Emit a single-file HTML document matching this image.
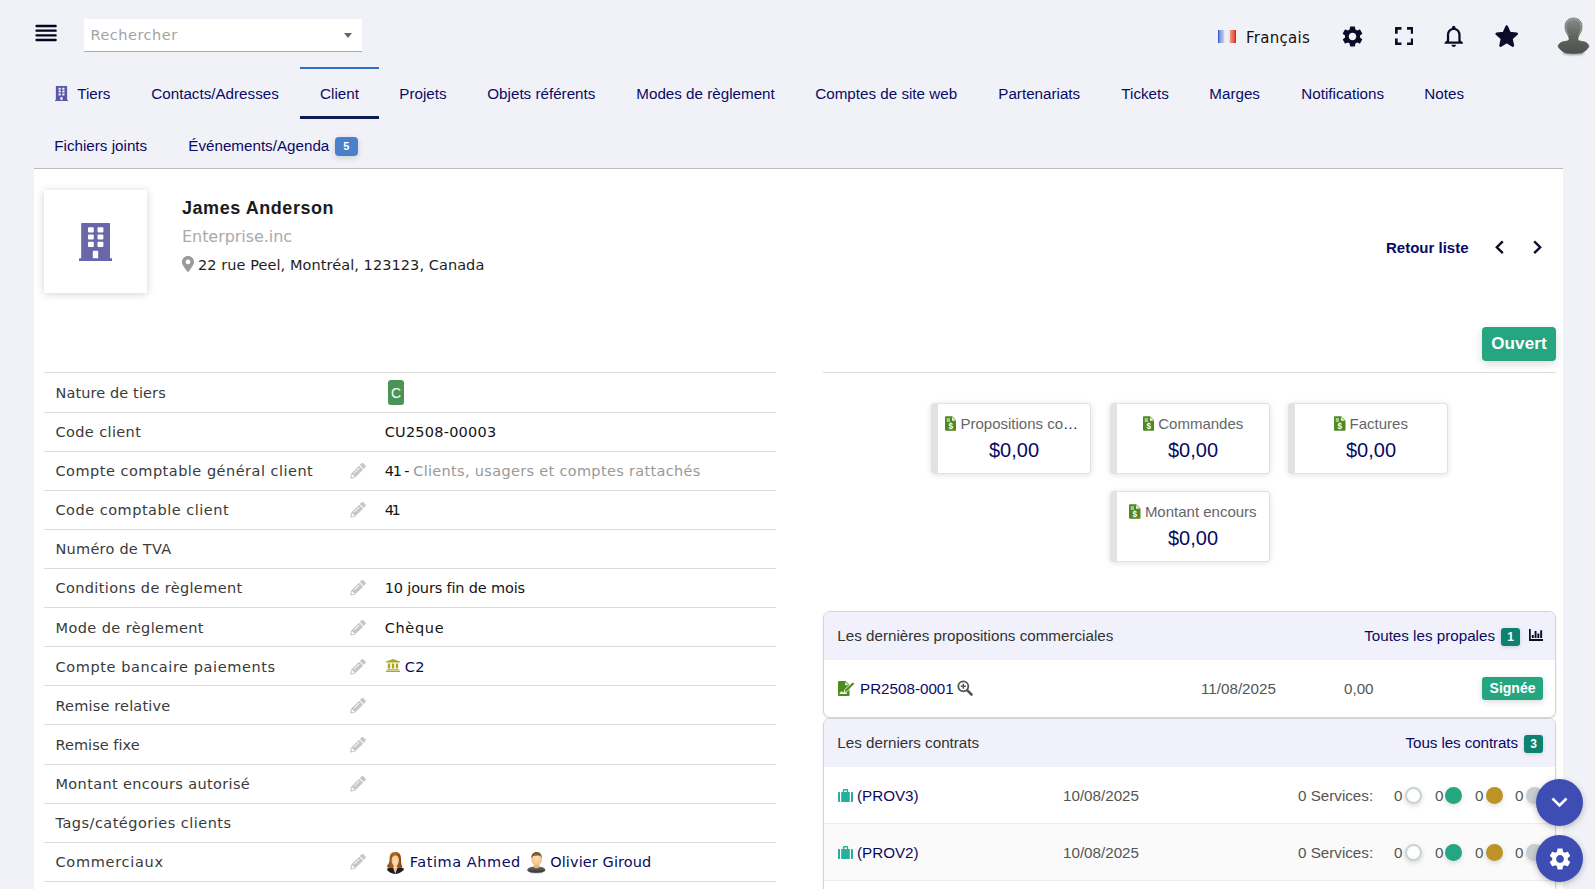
<!DOCTYPE html>
<html lang="fr">
<head>
<meta charset="utf-8">
<title>James Anderson - Client</title>
<style>
*{box-sizing:border-box;margin:0;padding:0}
html,body{width:1595px;height:889px;overflow:hidden;background:#f1f2f8}
body{position:relative;font-family:"Liberation Sans",sans-serif;font-size:15px;color:#0a0a64}
.abs{position:absolute}
.pp{font-family:"Liberation Sans",sans-serif;letter-spacing:.55px}
/* header */
#search{left:84px;top:19px;width:278px;height:33px;background:#fff;border-bottom:1px solid #aaa}
#search span{position:absolute;left:6.5px;top:6px;font-family:"DejaVu Sans",sans-serif;font-size:14.5px;line-height:20px;color:#a4a4a4;letter-spacing:.5px}
#search b{position:absolute;right:10px;top:14px;width:0;height:0;border:4px solid transparent;border-top:5px solid #666;border-bottom:0}
/* tabs */
.tab{position:absolute;height:52px;line-height:54px;font-size:15.2px;color:#0a0a64;white-space:nowrap}
.tab.act{border-top:2px solid #2f6fc4;border-bottom:3px solid #0c1e50}
.bdg{display:inline-block;background:#4a7fc9;color:#fff;font-size:11px;font-weight:bold;line-height:19px;height:19px;width:23px;text-align:center;border-radius:4px;vertical-align:middle;margin-left:5.5px;position:relative;top:0;letter-spacing:0;box-shadow:0 2px 6px rgba(0,0,0,.15)}
/* panel */
#panel{left:34px;top:168px;width:1529px;height:721px;background:#fff;border-top:1px solid #bbb}

/* Poppins substitutes */
.pr{font-family:"DejaVu Sans","Liberation Sans",sans-serif}
.pb{font-family:"Liberation Sans",sans-serif;font-weight:bold}
/* header right */
#lang{left:1246px;top:28px;font-size:15px;color:#111;line-height:20px;letter-spacing:.27px}
#flag{left:1218px;top:30px;width:18px;height:13px;background:linear-gradient(90deg,#2446c2 0,#7c9ae6 10%,#b4c6f3 30%,#e6e7ee 36%,#f3f3f4 50%,#e9e1e1 64%,#ef8b7e 70%,#ec5a4c 88%,#de1606 100%)}
/* photo */
#photo{left:44px;top:190px;width:103px;height:103px;background:#fff;box-shadow:0 1px 8px rgba(0,0,0,.18)}
#name{left:182px;top:196px;font-size:18px;line-height:24px;color:#1c1c1c;letter-spacing:.55px}
#comp{left:182px;top:226px;font-size:16px;line-height:22px;color:#aaa;letter-spacing:-.05px}
#addr{left:198px;top:255px;font-size:14.5px;line-height:20px;color:#1e1e1e;letter-spacing:.07px}
/* left table */
#lt{left:44px;top:372px;width:732px}
#lt .r{position:absolute;left:0;width:732px;height:40px;border-top:1px solid #dcdcdc;font-size:14.5px;line-height:39px;white-space:nowrap;color:#141414}
#lt .l{position:absolute;left:11.5px;color:#3a3a3a}
#lt .r>span,#lt .r>a{position:absolute}
#lt .e{position:absolute;left:305.5px;top:11px;width:16px;height:15.5px}
#lt .g{color:#999}
#lt a{color:#0a0a64;text-decoration:none}
.cbadge{width:16px;height:25px;line-height:27px;background:#4a9555;color:#fff;border-radius:3px;text-align:center;font-family:"Liberation Sans",sans-serif;font-size:14px;left:344px;top:7px}
/* right */
#back{left:1386px;top:238px;font-size:15px;line-height:20px;color:#0a0a64}
#open{left:1482px;top:327px;width:74px;height:34px;background:#25a580;border-radius:4px;color:#fff;font-size:17px;letter-spacing:.15px;line-height:34px;text-align:center;box-shadow:0 3px 9px rgba(0,0,0,.14)}
#rline{left:823px;top:372px;width:733px;height:1px;background:#dcdcdc}
.ib{position:absolute;width:160px;height:71px;background:#fff;border:1px solid #e2e2e2;border-left:7px solid #e2e2e2;border-radius:4px;box-shadow:0 1px 6px rgba(0,0,0,.12);text-align:center;white-space:nowrap}
.ib .t{position:absolute;left:0;right:0;top:10px;font-size:15px;line-height:20px;color:#666}
.ib .a{position:absolute;left:0;right:0;top:33px;font-size:20px;line-height:26px;color:#0a0a64}
.ib svg{vertical-align:-2px;margin-right:4px;width:11.5px}
.tb{position:absolute;left:823px;width:733px;border:1px solid #d4d4d4;border-radius:7px;background:#fff;box-shadow:0 1px 2px rgba(0,0,0,.1);overflow:hidden}
.tb .h{height:48px;background:#f0f1fb;position:relative;line-height:48px;font-size:15.2px;color:#333}
.tb .h .lt{position:absolute;left:13.3px}
.tb .h .rt{position:absolute;right:12px;color:#0a0a64}
.tb .rw{height:57px;position:relative;line-height:57px;font-size:15.2px;color:#555;border-top:1px solid #ececec;white-space:nowrap}
.tb .rw.alt{background:#fafafa}
.tb .rw span,.tb .rw a{position:absolute;top:0}
.tb a{color:#0a0a64;text-decoration:none}
.nb{display:inline-block;background:#0d8270;color:#fff;font-size:12px;font-weight:bold;width:19px;height:18px;line-height:18px;border-radius:3px;text-align:center;vertical-align:middle;margin-left:6px;position:relative;top:0;box-shadow:0 1px 4px rgba(0,0,0,.15)}
.sg{position:absolute;background:#25a580;color:#fff;font-weight:bold;font-size:14px;border-radius:3px;text-align:center;box-shadow:0 2px 6px rgba(0,0,0,.15)}
.dot{position:absolute;width:17px;height:17px;border-radius:50%;box-shadow:0 2px 5px rgba(0,0,0,.15)}
.fab{position:absolute;width:47px;height:47px;border-radius:50%;background:#3d4db3;box-shadow:0 2px 6px rgba(0,0,0,.25)}
</style>
</head>
<body>
<!-- header -->
<svg class="abs" style="left:34px;top:23px" width="24" height="20" viewBox="0 0 24 20"><path stroke="#05051e" stroke-width="2.400" stroke-linecap="round" fill="none" d="M2.600 2.950H21.600M2.600 7.650H21.600M2.600 12.350H21.600M2.600 17H21.600"/></svg>
<div id="search" class="abs"><span>Rechercher</span><b></b></div>

<!-- tabs -->
<svg class="abs" style="left:55px;top:86px" width="13" height="15" viewBox="0 0 33.2 38"><path fill="#5a59a6" fill-rule="evenodd" d="M2.2 0.6Q2.2 0 2.8 0H30.4Q31 0 31 .6V35.3H32.6Q33.2 35.3 33.2 35.9V37.4Q33.2 38 32.6 38H.6Q0 38 0 37.4V35.9Q0 35.3 .6 35.3H2.2ZM9 5.3Q9 4.3 10 4.3H13.8Q14.8 4.3 14.8 5.3V8.5Q14.8 9.5 13.8 9.5H10Q9 9.5 9 8.5ZM18.5 5.3Q18.5 4.3 19.5 4.3H23.4Q24.4 4.3 24.4 5.3V8.5Q24.4 9.5 23.4 9.5H19.5Q18.5 9.5 18.5 8.5ZM9 12.4Q9 11.4 10 11.4H13.8Q14.8 11.4 14.8 12.4V15.6Q14.8 16.6 13.8 16.6H10Q9 16.6 9 15.6ZM18.5 12.4Q18.5 11.4 19.5 11.4H23.4Q24.4 11.4 24.4 12.4V15.6Q24.4 16.6 23.4 16.6H19.5Q18.5 16.6 18.5 15.6ZM9 19.8Q9 18.8 10 18.8H13.8Q14.8 18.8 14.8 19.8V23Q14.8 24 13.8 24H10Q9 24 9 23ZM18.5 19.8Q18.5 18.8 19.5 18.8H23.4Q24.4 18.8 24.4 19.8V23Q24.4 24 23.4 24H19.5Q18.5 24 18.5 23ZM13.8 28.8Q13.8 27.8 14.8 27.8H18.2Q19.2 27.8 19.2 28.8V35.3H13.8Z"/></svg>
<div class="tab" style="left:77.2px;top:67px">Tiers</div>
<div class="tab" style="left:151.3px;top:67px">Contacts/Adresses</div>
<div class="tab act" style="left:300px;top:67px;width:79px;text-align:center;line-height:50px">Client</div>
<div class="tab" style="left:399.3px;top:67px">Projets</div>
<div class="tab" style="left:487.3px;top:67px">Objets référents</div>
<div class="tab" style="left:636.3px;top:67px">Modes de règlement</div>
<div class="tab" style="left:815.3px;top:67px">Comptes de site web</div>
<div class="tab" style="left:998.3px;top:67px">Partenariats</div>
<div class="tab" style="left:1121.3px;top:67px">Tickets</div>
<div class="tab" style="left:1209.3px;top:67px">Marges</div>
<div class="tab" style="left:1301.3px;top:67px">Notifications</div>
<div class="tab" style="left:1424.3px;top:67px">Notes</div>
<div class="tab" style="left:54.3px;top:119px">Fichiers joints</div>
<div class="tab" style="left:188.3px;top:119px">Événements/Agenda<span class="bdg">5</span></div>


<!-- header right -->
<div id="flag" class="abs"></div>
<div id="lang" class="abs pr">Français</div>
<svg class="abs" style="left:1339.800px;top:23.500px" width="25" height="25" viewBox="0 0 24 24"><path fill="#0c0c28" d="M19.14 12.94c.04-.3.06-.61.06-.94 0-.32-.02-.64-.07-.94l2.03-1.58c.18-.14.23-.41.12-.61l-1.92-3.32c-.12-.22-.37-.29-.59-.22l-2.39.96c-.5-.38-1.03-.7-1.62-.94l-.36-2.54c-.04-.24-.24-.41-.48-.41h-3.84c-.24 0-.43.17-.47.41l-.36 2.54c-.59.24-1.13.57-1.62.94l-2.39-.96c-.22-.08-.47 0-.59.22L2.74 8.87c-.12.21-.08.47.12.61l2.03 1.58c-.05.3-.09.63-.09.94s.02.64.07.94l-2.03 1.58c-.18.14-.23.41-.12.61l1.92 3.32c.12.22.37.29.59.22l2.39-.96c.5.38 1.03.7 1.62.94l.36 2.54c.05.24.24.41.48.41h3.84c.24 0 .44-.17.47-.41l.36-2.54c.59-.24 1.13-.56 1.62-.94l2.39.96c.22.08.47 0 .59-.22l1.92-3.32c.12-.22.07-.47-.12-.61l-2.01-1.58zM12 15.6c-1.98 0-3.6-1.62-3.6-3.6s1.62-3.6 3.6-3.6 3.6 1.62 3.6 3.6-1.62 3.6-3.6 3.6z"/></svg>
<svg class="abs" style="left:1394.800px;top:26.900px" width="18.500" height="18.300" viewBox="0 0 20 19" preserveAspectRatio="none"><path fill="none" stroke="#0c0c28" stroke-width="3" stroke-linejoin="round" d="M1.4 7V1.4H7M13 1.4H18.6V7M18.6 12V17.6H13M7 17.6H1.4V12"/></svg>
<svg class="abs" style="left:1440.100px;top:23.100px" width="27.500" height="26.100" viewBox="0 0 24 24" preserveAspectRatio="none"><path fill="#0c0c28" d="M12 22c1.1 0 2-.9 2-2h-4c0 1.1.9 2 2 2zm6-6v-5c0-3.07-1.63-5.64-4.5-6.32V4c0-.83-.67-1.5-1.5-1.5s-1.5.67-1.5 1.5v.68C7.64 5.36 6 7.92 6 11v5l-2 2v1h16v-1l-2-2zm-2 1H8v-6c0-2.48 1.51-4.5 4-4.5s4 2.02 4 4.5v6z"/></svg>
<svg class="abs" style="left:1493px;top:23px" width="28" height="28" viewBox="0 0 28 28"><path fill="#0c0c28" stroke="#0c0c28" stroke-width="2.6" stroke-linejoin="round" d="M13.70 3.60L16.58 10.14L23.69 10.86L18.36 15.61L19.87 22.59L13.70 19.00L7.53 22.59L9.04 15.61L3.71 10.86L10.82 10.14Z"/></svg>
<svg class="abs" style="left:1556px;top:16px" width="36" height="42" viewBox="0 0 36 42"><defs><linearGradient id="ug" x1="0" y1="0" x2="0" y2="1"><stop offset="0" stop-color="#8a8c88"/><stop offset=".45" stop-color="#666864"/><stop offset="1" stop-color="#4e504c"/></linearGradient><filter id="ub" x="-20%" y="-50%" width="140%" height="200%"><feGaussianBlur stdDeviation="1"/></filter></defs><ellipse cx="17.5" cy="37" rx="11" ry="2" fill="#000" opacity=".35" filter="url(#ub)"/><path fill="url(#ug)" stroke="#4a4c48" stroke-width=".6" d="M17.5 2C12.5 2 9 5.500 9 10.500 9 14.500 10.500 17 12 19.500 13.200 21.500 13.500 23 12.500 24.500 11 25.500 7 25.200 5 26.500 3 27.800 1.800 29.500 2.200 30.800 3 32.500 6 35.500 9 36.800 12 37.600 23 37.600 26 36.800 29 35.500 32 32.500 32.800 30.800 33.200 29.500 32 27.800 30 26.500 28 25.200 24 25.500 22.500 24.500 21.500 23 21.800 21.500 23 19.500 24.500 17 26 14.500 26 10.500 26 5.500 22.500 2 17.500 2Z"/><path fill="none" stroke="#c8cac6" stroke-width=".7" opacity=".8" d="M12.800 19.600C11.200 17 9.900 14.300 9.900 10.600 9.900 6 13 2.900 17.500 2.900S25.100 6 25.100 10.600C25.100 14.300 23.800 17 22.200 19.600"/></svg>

<div id="panel" class="abs"></div>
<!-- tier header -->
<div id="photo" class="abs"></div>
<svg class="abs" style="left:79px;top:223px" width="33.2" height="38" viewBox="0 0 33.2 38"><path fill="#6867a9" fill-rule="evenodd" d="M2.2 0.6Q2.2 0 2.8 0H30.4Q31 0 31 .6V35.3H32.6Q33.2 35.3 33.2 35.9V37.4Q33.2 38 32.6 38H.6Q0 38 0 37.4V35.9Q0 35.3 .6 35.3H2.2ZM9 5.3Q9 4.3 10 4.3H13.8Q14.8 4.3 14.8 5.3V8.5Q14.8 9.5 13.8 9.5H10Q9 9.5 9 8.5ZM18.5 5.3Q18.5 4.3 19.5 4.3H23.4Q24.4 4.3 24.4 5.3V8.5Q24.4 9.5 23.4 9.5H19.5Q18.5 9.5 18.5 8.5ZM9 12.4Q9 11.4 10 11.4H13.8Q14.8 11.4 14.8 12.4V15.6Q14.8 16.6 13.8 16.6H10Q9 16.6 9 15.6ZM18.5 12.4Q18.5 11.4 19.5 11.4H23.4Q24.4 11.4 24.4 12.4V15.6Q24.4 16.6 23.4 16.6H19.5Q18.5 16.6 18.5 15.6ZM9 19.8Q9 18.8 10 18.8H13.8Q14.8 18.8 14.8 19.8V23Q14.8 24 13.8 24H10Q9 24 9 23ZM18.5 19.8Q18.5 18.8 19.5 18.8H23.4Q24.4 18.8 24.4 19.8V23Q24.4 24 23.4 24H19.5Q18.5 24 18.5 23ZM13.8 28.8Q13.8 27.8 14.8 27.8H18.2Q19.2 27.8 19.2 28.8V35.3H13.8Z"/></svg>
<div id="name" class="abs pb">James Anderson</div>
<div id="comp" class="abs pr">Enterprise.inc</div>
<svg class="abs" style="left:181.5px;top:255.5px" width="12" height="16" viewBox="0 0 12 16"><path fill="#9a9a9a" fill-rule="evenodd" d="M6 0C2.700 0 0 2.600 0 5.900c0 2.400.9 3.200 5.200 9.600.4.600 1.200.6 1.600 0C11.100 9.100 12 8.300 12 5.900 12 2.600 9.300 0 6 0zm0 3.500a2.400 2.400 0 1 1 0 4.800 2.400 2.400 0 0 1 0-4.800z"/></svg>
<div id="addr" class="abs pr">22 rue Peel, Montréal, 123123, Canada</div>

<!-- left table -->
<div id="lt" class="abs pr">
<div class="r" style="top:0px"><span class="l" style="top:1px;letter-spacing:0.11px">Nature de tiers</span><span class="cbadge">C</span></div>
<div class="r" style="top:40px"><span class="l" style="top:0px;letter-spacing:0.38px">Code client</span><span style="left:340.7px;top:0px;letter-spacing:0.23px">CU2508-00003</span></div>
<div class="r" style="top:79px"><span class="l" style="top:0px;letter-spacing:0.49px">Compte comptable général client</span><svg class="e" style="top:11px" viewBox="0 0 512 512"><path fill="#c6c6c6" d="M497.900 142.100l-46.100 46.100c-4.700 4.700-12.300 4.700-17 0l-111-111c-4.700-4.700-4.700-12.300 0-17l46.100-46.100c18.700-18.700 49.100-18.700 67.900 0l60.100 60.100c18.800 18.700 18.800 49.100 0 67.900zM284.200 99.800L21.600 362.400.4 483.900c-2.900 16.400 11.400 30.600 27.800 27.800l121.500-21.300 262.600-262.600c4.700-4.700 4.700-12.300 0-17l-111-111c-4.800-4.700-12.400-4.700-17.100 0zM124.100 339.900c-5.500-5.500-5.500-14.300 0-19.800l154-154c5.500-5.500 14.300-5.500 19.800 0s5.500 14.300 0 19.800l-154 154c-5.500 5.500-14.300 5.500-19.800 0zM88 424h48v36.300l-64.500 11.300-31.100-31.100L51.700 376H88v48z"/></svg><span style="left:340.7px;top:0px;letter-spacing:-1.20px">41 -</span><span class="g" style="left:369.2px;top:0px;letter-spacing:0.32px">Clients, usagers et comptes rattachés</span></div>
<div class="r" style="top:118px"><span class="l" style="top:0px;letter-spacing:0.50px">Code comptable client</span><svg class="e" style="top:11px" viewBox="0 0 512 512"><path fill="#c6c6c6" d="M497.900 142.100l-46.100 46.100c-4.700 4.700-12.300 4.700-17 0l-111-111c-4.700-4.700-4.700-12.300 0-17l46.100-46.100c18.700-18.700 49.100-18.700 67.900 0l60.100 60.100c18.800 18.700 18.800 49.100 0 67.900zM284.200 99.800L21.600 362.400.4 483.900c-2.900 16.400 11.400 30.600 27.800 27.800l121.500-21.300 262.600-262.600c4.700-4.700 4.700-12.300 0-17l-111-111c-4.800-4.700-12.400-4.700-17.100 0zM124.100 339.900c-5.500-5.500-5.500-14.300 0-19.800l154-154c5.500-5.500 14.300-5.500 19.800 0s5.500 14.300 0 19.800l-154 154c-5.500 5.500-14.300 5.500-19.800 0zM88 424h48v36.300l-64.500 11.300-31.100-31.100L51.700 376H88v48z"/></svg><span style="left:340.7px;top:0px;letter-spacing:-2.48px">41</span></div>
<div class="r" style="top:157px"><span class="l" style="top:0px;letter-spacing:0.24px">Numéro de TVA</span></div>
<div class="r" style="top:196px"><span class="l" style="top:0px;letter-spacing:0.36px">Conditions de règlement</span><svg class="e" style="top:11px" viewBox="0 0 512 512"><path fill="#c6c6c6" d="M497.900 142.100l-46.100 46.100c-4.700 4.700-12.300 4.700-17 0l-111-111c-4.700-4.700-4.700-12.300 0-17l46.100-46.100c18.700-18.700 49.100-18.700 67.900 0l60.100 60.100c18.800 18.700 18.800 49.100 0 67.900zM284.200 99.800L21.600 362.400.4 483.900c-2.900 16.400 11.400 30.600 27.800 27.800l121.500-21.300 262.600-262.600c4.700-4.700 4.700-12.300 0-17l-111-111c-4.800-4.700-12.400-4.700-17.100 0zM124.100 339.900c-5.500-5.500-5.500-14.300 0-19.800l154-154c5.500-5.500 14.300-5.500 19.800 0s5.500 14.300 0 19.800l-154 154c-5.500 5.500-14.300 5.500-19.800 0zM88 424h48v36.300l-64.500 11.300-31.100-31.100L51.700 376H88v48z"/></svg><span style="left:340.7px;top:0px;letter-spacing:-0.16px">10 jours fin de mois</span></div>
<div class="r" style="top:235px"><span class="l" style="top:1px;letter-spacing:0.41px">Mode de règlement</span><svg class="e" style="top:12px" viewBox="0 0 512 512"><path fill="#c6c6c6" d="M497.900 142.100l-46.100 46.100c-4.700 4.700-12.300 4.700-17 0l-111-111c-4.700-4.700-4.700-12.300 0-17l46.100-46.100c18.700-18.700 49.100-18.700 67.900 0l60.100 60.100c18.800 18.700 18.800 49.100 0 67.900zM284.200 99.800L21.600 362.400.4 483.900c-2.900 16.400 11.400 30.600 27.800 27.800l121.500-21.300 262.600-262.600c4.700-4.700 4.700-12.300 0-17l-111-111c-4.800-4.700-12.400-4.700-17.100 0zM124.100 339.900c-5.500-5.500-5.500-14.300 0-19.800l154-154c5.500-5.500 14.300-5.500 19.800 0s5.500 14.300 0 19.800l-154 154c-5.500 5.500-14.300 5.500-19.800 0zM88 424h48v36.300l-64.500 11.300-31.100-31.100L51.700 376H88v48z"/></svg><span style="left:340.7px;top:1px;letter-spacing:0.67px">Chèque</span></div>
<div class="r" style="top:274px"><span class="l" style="top:1px;letter-spacing:0.59px">Compte bancaire paiements</span><svg class="e" style="top:12px" viewBox="0 0 512 512"><path fill="#c6c6c6" d="M497.900 142.100l-46.100 46.100c-4.700 4.700-12.300 4.700-17 0l-111-111c-4.700-4.700-4.700-12.300 0-17l46.100-46.100c18.700-18.700 49.100-18.700 67.900 0l60.100 60.100c18.800 18.700 18.800 49.100 0 67.900zM284.200 99.800L21.600 362.400.4 483.900c-2.900 16.400 11.400 30.600 27.800 27.800l121.500-21.300 262.600-262.600c4.700-4.700 4.700-12.300 0-17l-111-111c-4.800-4.700-12.400-4.700-17.100 0zM124.100 339.900c-5.500-5.500-5.500-14.300 0-19.800l154-154c5.500-5.500 14.300-5.500 19.800 0s5.500 14.300 0 19.800l-154 154c-5.500 5.500-14.300 5.500-19.800 0zM88 424h48v36.300l-64.500 11.300-31.100-31.100L51.700 376H88v48z"/></svg><svg style="position:absolute;left:342px;top:12px" width="14" height="13" viewBox="0 0 14 13"><path fill="#a9a822" d="M7 0L0 2.600V3.600H14V2.600ZM1.800 4.400H4.200V9.600H1.800ZM5.800 4.400H8.200V9.600H5.800ZM9.800 4.400H12.200V9.600H9.800ZM1 10.200H13V11.200H1ZM0 11.800H14V13H0Z"/></svg><a style="left:360.8px;top:1px;letter-spacing:0.32px">C2</a></div>
<div class="r" style="top:313px"><span class="l" style="top:1px;letter-spacing:0.17px">Remise relative</span><svg class="e" style="top:12px" viewBox="0 0 512 512"><path fill="#c6c6c6" d="M497.900 142.100l-46.100 46.100c-4.700 4.700-12.300 4.700-17 0l-111-111c-4.700-4.700-4.700-12.300 0-17l46.100-46.100c18.700-18.700 49.100-18.700 67.900 0l60.100 60.100c18.800 18.700 18.800 49.100 0 67.900zM284.200 99.800L21.600 362.400.4 483.900c-2.900 16.400 11.400 30.600 27.800 27.800l121.500-21.300 262.600-262.600c4.700-4.700 4.700-12.300 0-17l-111-111c-4.800-4.700-12.400-4.700-17.100 0zM124.100 339.900c-5.500-5.500-5.500-14.300 0-19.800l154-154c5.500-5.500 14.300-5.500 19.800 0s5.500 14.300 0 19.800l-154 154c-5.500 5.500-14.300 5.500-19.800 0zM88 424h48v36.300l-64.500 11.300-31.100-31.100L51.700 376H88v48z"/></svg></div>
<div class="r" style="top:352px"><span class="l" style="top:1px;letter-spacing:0.04px">Remise fixe</span><svg class="e" style="top:12px" viewBox="0 0 512 512"><path fill="#c6c6c6" d="M497.900 142.100l-46.100 46.100c-4.700 4.700-12.300 4.700-17 0l-111-111c-4.700-4.700-4.700-12.300 0-17l46.100-46.100c18.700-18.700 49.100-18.700 67.900 0l60.100 60.100c18.800 18.700 18.800 49.100 0 67.900zM284.200 99.800L21.600 362.400.4 483.900c-2.900 16.400 11.400 30.600 27.800 27.800l121.500-21.300 262.600-262.600c4.700-4.700 4.700-12.300 0-17l-111-111c-4.800-4.700-12.400-4.700-17.100 0zM124.100 339.900c-5.500-5.500-5.500-14.300 0-19.800l154-154c5.500-5.500 14.300-5.500 19.800 0s5.500 14.300 0 19.800l-154 154c-5.500 5.500-14.300 5.500-19.800 0zM88 424h48v36.300l-64.500 11.300-31.100-31.100L51.700 376H88v48z"/></svg></div>
<div class="r" style="top:392px"><span class="l" style="top:0px;letter-spacing:0.36px">Montant encours autorisé</span><svg class="e" style="top:11px" viewBox="0 0 512 512"><path fill="#c6c6c6" d="M497.900 142.100l-46.100 46.100c-4.700 4.700-12.300 4.700-17 0l-111-111c-4.700-4.700-4.700-12.300 0-17l46.100-46.100c18.700-18.700 49.100-18.700 67.900 0l60.100 60.100c18.800 18.700 18.800 49.100 0 67.900zM284.200 99.800L21.600 362.400.4 483.900c-2.900 16.400 11.400 30.600 27.800 27.800l121.500-21.300 262.600-262.600c4.700-4.700 4.700-12.300 0-17l-111-111c-4.800-4.700-12.400-4.700-17.100 0zM124.100 339.900c-5.500-5.500-5.500-14.300 0-19.800l154-154c5.500-5.500 14.300-5.500 19.800 0s5.500 14.300 0 19.800l-154 154c-5.500 5.500-14.300 5.500-19.800 0zM88 424h48v36.300l-64.500 11.300-31.100-31.100L51.700 376H88v48z"/></svg></div>
<div class="r" style="top:431px"><span class="l" style="top:0px;letter-spacing:0.48px">Tags/catégories clients</span></div>
<div class="r" style="top:470px"><span class="l" style="top:0px;letter-spacing:0.71px">Commerciaux</span><svg class="e" style="top:11px" viewBox="0 0 512 512"><path fill="#c6c6c6" d="M497.900 142.100l-46.100 46.100c-4.700 4.700-12.300 4.700-17 0l-111-111c-4.700-4.700-4.700-12.300 0-17l46.100-46.100c18.700-18.700 49.100-18.700 67.900 0l60.100 60.100c18.800 18.700 18.800 49.100 0 67.900zM284.200 99.800L21.600 362.400.4 483.900c-2.900 16.400 11.400 30.600 27.800 27.800l121.500-21.300 262.600-262.600c4.700-4.700 4.700-12.300 0-17l-111-111c-4.800-4.700-12.400-4.700-17.100 0zM124.100 339.900c-5.500-5.500-5.500-14.300 0-19.800l154-154c5.500-5.500 14.300-5.500 19.800 0s5.500 14.300 0 19.800l-154 154c-5.500 5.500-14.300 5.500-19.800 0zM88 424h48v36.300l-64.500 11.300-31.100-31.100L51.700 376H88v48z"/></svg><svg style="position:absolute;left:342px;top:9px" width="19" height="22" viewBox="0 0 19 22"><defs><linearGradient id="hw" x1="0" y1="0" x2="1" y2="0"><stop offset="0" stop-color="#8a4a12"/><stop offset=".5" stop-color="#b8701e"/><stop offset="1" stop-color="#7a3e10"/></linearGradient><radialGradient id="sk" cx=".5" cy=".4" r=".7"><stop offset="0" stop-color="#ffe0b8"/><stop offset="1" stop-color="#eeb47c"/></radialGradient></defs><path fill="url(#hw)" d="M9.300 -.2C5.300 -.2 3.600 2.800 3.600 6.500 3.600 9.500 3 11.500 1.800 12.800 1 13.700 .8 14.600 1.600 15.400 3.200 16.200 5.500 15.800 6.500 15H12.200C13.500 15.800 15.500 16 16.600 15.200 15.400 13.500 15 11 15 6.500 15 2.800 13.300 -.2 9.300 -.2Z"/><path fill="url(#sk)" d="M9.300 3.200C7 3.200 5.600 5.200 5.600 8 5.600 10.800 7 13.200 8 13.800L7 16 9.300 21 11.600 16 10.600 13.800C11.600 13.200 13 10.800 13 8 13 5.200 11.600 3.200 9.300 3.200Z"/><path fill="#1e1e1e" d="M.8 17C2.500 15.800 5 15.300 7 15.200L9.300 21.800 11.600 15.200C13.600 15.300 16.500 15.800 18.300 16.800 17 19.500 13 21.800 9.300 21.900 5.500 21.800 2 19.800 .8 17Z"/><path fill="url(#hw)" d="M5.400 8.500C5.200 5 7 3 9.800 3.200 12 3.400 13.200 5 13.200 8 13.800 5.500 13.200 2.200 9.600 2 6 2 4.800 5.500 5.400 8.500Z"/></svg><svg style="position:absolute;left:483px;top:9px" width="19" height="22" viewBox="0 0 19 22"><defs><linearGradient id="sh" x1="0" y1="0" x2="0" y2="1"><stop offset="0" stop-color="#6e6e6e"/><stop offset="1" stop-color="#333"/></linearGradient></defs><ellipse cx="9.300" cy="20.300" rx="7" ry="1.300" fill="#000" opacity=".25"/><path fill="url(#sh)" d="M.3 18.200C.3 16 3 14.900 6.800 14.500H12C15.600 14.900 18.300 16 18.300 18.200 18.300 19.800 14.500 20.700 9.300 20.700S.3 19.800 .3 18.200Z"/><path fill="#e8b078" d="M7 12H12.200V15.500C11.200 16.600 8 16.600 7 15.500Z"/><ellipse cx="9.600" cy="7.300" rx="5.300" ry="6.600" fill="url(#sk)"/><path fill="#7a5a2e" d="M4.400 6.500C4 2.500 6.200 0 9.600 0S15.200 2.500 14.800 6.500C14.200 4.600 13.400 3.700 11.800 3.500 9.500 3.200 7 3.500 5.800 4.500 5 5.100 4.700 5.800 4.400 6.500Z"/></svg><a style="left:365.7px;top:0px;letter-spacing:0.55px">Fatima Ahmed</a><a style="left:506.2px;top:0px;letter-spacing:0.10px">Olivier Giroud</a></div>
<div class="r" style="top:509px"></div>
</div>
<!-- /left table -->
<!-- right column -->
<div id="back" class="abs pb">Retour liste</div>
<svg class="abs" style="left:1493.500px;top:240px" width="11" height="14.500" viewBox="0 0 10 13"><path fill="none" stroke="#0c0c28" stroke-width="2.200" d="M8 1.200L2.600 6.500 8 11.800"/></svg>
<svg class="abs" style="left:1531.500px;top:240px" width="11" height="14.500" viewBox="0 0 10 13"><path fill="none" stroke="#0c0c28" stroke-width="2.200" d="M2 1.200L7.400 6.500 2 11.800"/></svg>
<div id="open" class="abs pb">Ouvert</div>
<div id="rline" class="abs"></div>
<div class="ib" style="left:931px;top:403px"><div class="t" style="left:-5px"><svg width="12" height="15" viewBox="0 0 12 15"><path fill="#4f8a1e" d="M0 1Q0 0 1 0H7.500L12 4.500V14Q12 15 11 15H1Q0 15 0 14Z"/><path fill="#fff" d="M7.300 .8V4.700H11.200Z" opacity=".9"/><path fill="#fff" d="M1.800 2.200H5.200V3.200H1.800ZM1.800 4.300H5.200V5.300H1.800Z"/><text x="6" y="12.800" font-family="Liberation Sans,sans-serif" font-size="8.500" font-weight="bold" fill="#fff" text-anchor="middle">$</text></svg>Propositions co<span style="color:#0a0a64">…</span></div><div class="a">$0,00</div></div>
<div class="ib" style="left:1110px;top:403px"><div class="t"><svg width="12" height="15" viewBox="0 0 12 15"><path fill="#4f8a1e" d="M0 1Q0 0 1 0H7.500L12 4.500V14Q12 15 11 15H1Q0 15 0 14Z"/><path fill="#fff" d="M7.300 .8V4.700H11.200Z" opacity=".9"/><path fill="#fff" d="M1.800 2.200H5.200V3.200H1.800ZM1.800 4.300H5.200V5.300H1.800Z"/><text x="6" y="12.800" font-family="Liberation Sans,sans-serif" font-size="8.500" font-weight="bold" fill="#fff" text-anchor="middle">$</text></svg>Commandes</div><div class="a">$0,00</div></div>
<div class="ib" style="left:1288px;top:403px"><div class="t"><svg width="12" height="15" viewBox="0 0 12 15"><path fill="#4f8a1e" d="M0 1Q0 0 1 0H7.500L12 4.500V14Q12 15 11 15H1Q0 15 0 14Z"/><path fill="#fff" d="M7.300 .8V4.700H11.200Z" opacity=".9"/><path fill="#fff" d="M1.800 2.200H5.200V3.200H1.800ZM1.800 4.300H5.200V5.300H1.800Z"/><text x="6" y="12.800" font-family="Liberation Sans,sans-serif" font-size="8.500" font-weight="bold" fill="#fff" text-anchor="middle">$</text></svg>Factures</div><div class="a">$0,00</div></div>
<div class="ib" style="left:1110px;top:491px"><div class="t"><svg width="12" height="15" viewBox="0 0 12 15"><path fill="#4f8a1e" d="M0 1Q0 0 1 0H7.500L12 4.500V14Q12 15 11 15H1Q0 15 0 14Z"/><path fill="#fff" d="M7.300 .8V4.700H11.200Z" opacity=".9"/><path fill="#fff" d="M1.800 2.200H5.200V3.200H1.800ZM1.800 4.300H5.200V5.300H1.800Z"/><text x="6" y="12.800" font-family="Liberation Sans,sans-serif" font-size="8.500" font-weight="bold" fill="#fff" text-anchor="middle">$</text></svg>Montant encours</div><div class="a">$0,00</div></div>
<div class="tb" style="top:611px;height:107px"><div class="h"><span class="lt">Les dernières propositions commerciales</span><span class="rt">Toutes les propales<span class="nb">1</span><svg style="vertical-align:middle;margin-left:9px;position:relative;top:-2px" width="14" height="12" viewBox="0 0 16 12" preserveAspectRatio="none"><path fill="#0c0c28" d="M0 0H2V10H16V12H0ZM3.200 6H5.400V9H3.200ZM6.400 2H8.600V9H6.400ZM9.600 4.500H11.800V9H9.600ZM12.800 1.200H15V9H12.800Z"/></svg></span></div>
<div class="rw" style="border-top:0"><svg style="position:absolute;left:14px;top:21px" width="17" height="15" viewBox="0 0 17 15"><path fill="#4f8a1e" d="M0 1Q0 0 1 0H7.500L11.500 4V14Q11.500 15 10.500 15H1Q0 15 0 14Z"/><path fill="#fff" d="M7.200 .8V4.300H10.700Z" opacity=".9"/><path fill="#fff" d="M1.500 12.500C3 10 4 9.500 4.500 11 5 12 5.500 11 6.500 11.500L9 12V13H1.500Z" opacity=".9"/><path fill="#4f8a1e" stroke="#fff" stroke-width=".9" d="M6 11.500L6.800 8.700 14 1.500Q15 .8 16 1.800 16.800 2.800 16 3.600L8.800 10.800Z"/></svg><a style="left:36px">PR2508-0001</a><svg style="position:absolute;left:133px;top:20px" width="16" height="16" viewBox="0 0 16 16"><circle cx="6.300" cy="6.300" r="5" fill="none" stroke="#555" stroke-width="1.800"/><path stroke="#555" stroke-width="2.600" stroke-linecap="round" d="M10.300 10.300L14.500 14.500"/><path stroke="#555" stroke-width="1.500" d="M3.800 6.300H8.800M6.300 3.800V8.800"/></svg><span style="left:377px">11/08/2025</span><span style="left:520px">0,00</span><span class="sg" style="left:658px;top:17px;width:61px;height:23px;line-height:23px">Signée</span></div></div>
<div class="tb" style="top:718px;height:200px;border-bottom-left-radius:0;border-bottom-right-radius:0"><div class="h"><span class="lt">Les derniers contrats</span><span class="rt" style="letter-spacing:-.09px">Tous les contrats<span class="nb">3</span></span></div>
<div class="rw" style="border-top:0;height:56px;line-height:58px"><svg style="position:absolute;left:14px;top:22px" width="15" height="13" viewBox="0 0 15 13"><path fill="#25b09b" d="M0 4Q0 3 1 3H2V13H1Q0 13 0 12ZM3.200 3H4.800V1.200Q4.800 0 6 0H9Q10.200 0 10.200 1.200V3H11.800V13H3.200ZM6.200 1.400V3H8.800V1.400ZM13 3H14Q15 3 15 4V12Q15 13 14 13H13Z"/></svg><a style="left:33px">(PROV3)</a><span style="left:239px">10/08/2025</span><span style="left:474px">0 Services:</span><span style="left:570px">0</span><i class="dot" style="left:581px;top:20px;background:#fff;border:2px solid #c9d3d3"></i><span style="left:611px">0</span><i class="dot" style="left:621px;top:20px;background:#25a580;border:0"></i><span style="left:651px">0</span><i class="dot" style="left:662px;top:20px;background:#bd9226;border:0"></i><span style="left:691px">0</span><i class="dot" style="left:702px;top:20px;background:#c8cdcd;border:0"></i></div>
<div class="rw alt"><svg style="position:absolute;left:14px;top:22px" width="15" height="13" viewBox="0 0 15 13"><path fill="#25b09b" d="M0 4Q0 3 1 3H2V13H1Q0 13 0 12ZM3.200 3H4.800V1.200Q4.800 0 6 0H9Q10.200 0 10.200 1.200V3H11.800V13H3.200ZM6.200 1.400V3H8.800V1.400ZM13 3H14Q15 3 15 4V12Q15 13 14 13H13Z"/></svg><a style="left:33px">(PROV2)</a><span style="left:239px">10/08/2025</span><span style="left:474px">0 Services:</span><span style="left:570px">0</span><i class="dot" style="left:581px;top:20px;background:#fff;border:2px solid #c9d3d3"></i><span style="left:611px">0</span><i class="dot" style="left:621px;top:20px;background:#25a580;border:0"></i><span style="left:651px">0</span><i class="dot" style="left:662px;top:20px;background:#bd9226;border:0"></i><span style="left:691px">0</span><i class="dot" style="left:702px;top:20px;background:#c8cdcd;border:0"></i></div>
<div class="rw"><svg style="position:absolute;left:14px;top:22px" width="15" height="13" viewBox="0 0 15 13"><path fill="#25b09b" d="M0 4Q0 3 1 3H2V13H1Q0 13 0 12ZM3.200 3H4.800V1.200Q4.800 0 6 0H9Q10.200 0 10.200 1.200V3H11.800V13H3.200ZM6.200 1.400V3H8.800V1.400ZM13 3H14Q15 3 15 4V12Q15 13 14 13H13Z"/></svg><a style="left:33px">(PROV1)</a><span style="left:239px">10/08/2025</span><span style="left:474px">0 Services:</span><span style="left:570px">0</span><i class="dot" style="left:581px;top:20px;background:#fff;border:2px solid #c9d3d3"></i><span style="left:611px">0</span><i class="dot" style="left:621px;top:20px;background:#25a580;border:0"></i><span style="left:651px">0</span><i class="dot" style="left:662px;top:20px;background:#bd9226;border:0"></i><span style="left:691px">0</span><i class="dot" style="left:702px;top:20px;background:#c8cdcd;border:0"></i></div>
</div>
<!-- floating buttons -->
<div class="fab" style="left:1536px;top:779px"><svg style="position:absolute;left:15px;top:18px" width="17" height="11" viewBox="0 0 17 11"><path fill="none" stroke="#fff" stroke-width="2.600" d="M1.500 1.500L8.500 8.500 15.500 1.500"/></svg></div>
<div class="fab" style="left:1536px;top:835px"><svg style="position:absolute;left:10.500px;top:10.500px" width="26" height="26" viewBox="0 0 24 24"><path fill="#fff" d="M19.140 12.940c.04-.3.06-.61.06-.94 0-.32-.02-.64-.07-.94l2.030-1.580c.18-.14.23-.41.120-.61l-1.920-3.320c-.12-.22-.37-.29-.59-.22l-2.390.96c-.5-.38-1.030-.7-1.620-.94l-.36-2.540c-.04-.24-.24-.41-.48-.41h-3.840c-.24 0-.43.17-.47.41l-.36 2.540c-.59.24-1.130.57-1.620.94l-2.390-.96c-.22-.08-.47 0-.59.22L2.740 8.870c-.12.21-.08.47.12.61l2.030 1.580c-.05.3-.09.63-.09.94s.02.64.07.94l-2.030 1.580c-.18.14-.23.41-.12.61l1.920 3.320c.12.22.37.29.59.22l2.390-.96c.5.38 1.030.7 1.620.94l.36 2.540c.05.24.24.41.48.41h3.840c.24 0 .44-.17.47-.41l.36-2.540c.59-.24 1.130-.56 1.620-.94l2.390.96c.22.08.47 0 .59-.22l1.920-3.320c.12-.22.07-.47-.12-.61l-2.010-1.580zM12 15.600c-1.980 0-3.600-1.620-3.600-3.600s1.620-3.600 3.600-3.600 3.600 1.620 3.600 3.600-1.620 3.600-3.600 3.600z"/></svg></div>
</body>
</html>
